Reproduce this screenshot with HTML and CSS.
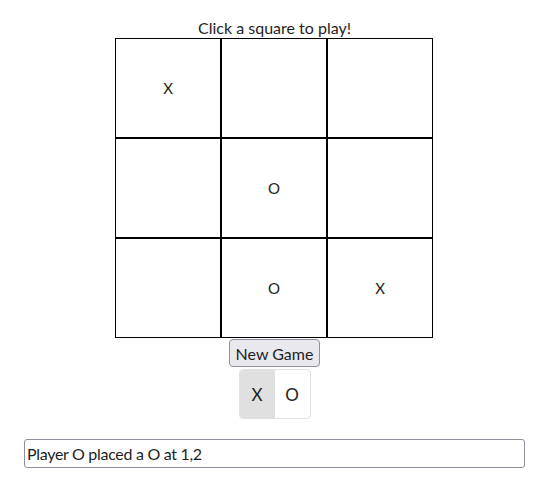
FILE: index.html
```html
<!DOCTYPE html>
<html>
<head>
<meta charset="utf-8">
<link rel="stylesheet" href="styles.css">
</head>
<body>
<div class="app">
  <div class="title">Click a square to play!</div>
  <div class="board">
    <div class="cell">X</div>
    <div class="cell"></div>
    <div class="cell"></div>
    <div class="cell"></div>
    <div class="cell">O</div>
    <div class="cell"></div>
    <div class="cell"></div>
    <div class="cell">O</div>
    <div class="cell">X</div>
  </div>
  <button class="btn">New Game</button>
  <div class="toggle">
    <div class="seg seg-active">X</div>
    <div class="seg">O</div>
  </div>
</div>
<div class="log">
  <input class="log-input" type="text" value="Player O placed a O at 1,2">
</div>
</body>
</html>
```
FILE: styles.css
```css
body {
  margin: 8px;
  font-family: "Lato", "Noto Sans", sans-serif;
  color: #1e1e1e;
  background: #fff;
}
.app {
  display: flex;
  flex-direction: column;
  align-items: center;
}
.title {
  font-size: 16px;
  line-height: 21px;
  margin-top: 9px;
}
.board {
  display: grid;
  grid-template-columns: repeat(3, 106px);
  grid-template-rows: repeat(3, 100px);
  margin-right: 1px;
}
.cell {
  box-sizing: border-box;
  border: 1px solid #000;
  display: flex;
  align-items: center;
  justify-content: center;
  font-size: 15px;
}
.btn {
  margin-top: 1px;
  font-family: inherit;
  font-size: 16px;
  height: 28px;
  padding: 0 6px;
  background: #e9e9ed;
  border: 1px solid #8f8f9d;
  border-radius: 4px;
  color: #1e1e1e;
}
.toggle {
  margin-top: 2px;
  display: flex;
  border: 1px solid #e2e2e2;
  border-radius: 4px;
  overflow: hidden;
}
.seg {
  width: 35px;
  height: 48px;
  display: flex;
  align-items: center;
  justify-content: center;
  font-size: 17px;
}
.seg-active {
  background: #e0e0e0;
}
.log {
  margin: 20px 16px 0;
}
.log-input {
  box-sizing: border-box;
  width: 100%;
  height: 29px;
  font-family: inherit;
  font-size: 16px;
  letter-spacing: -0.3px;
  padding: 0 2px;
  border: 1px solid #8f8f9d;
  border-radius: 3px;
  color: #1e1e1e;
  margin: 0;
}
```
